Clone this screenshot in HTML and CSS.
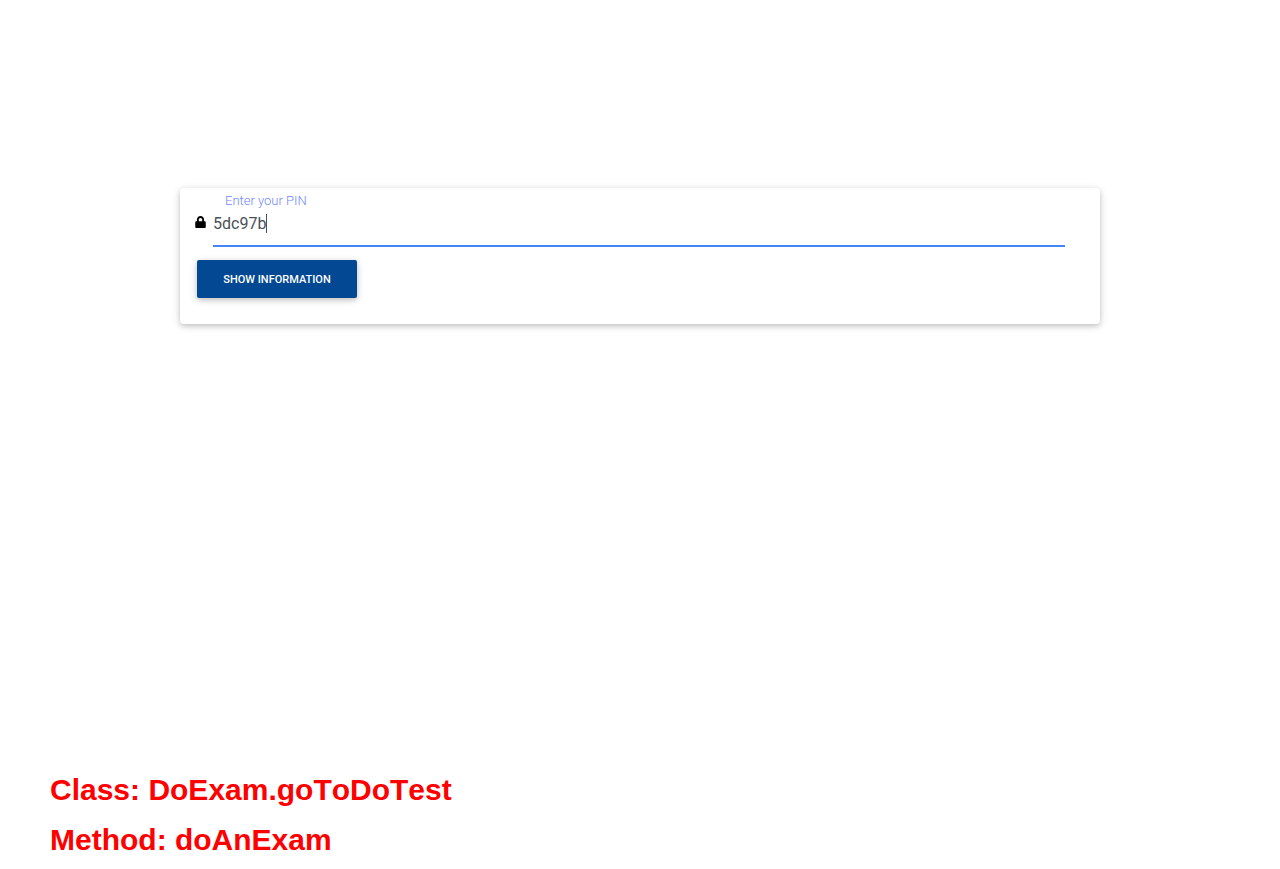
FILE: index.html
```html
<!DOCTYPE html>
<html lang="en">
<head>
<meta charset="utf-8">
<meta name="viewport" content="width=device-width, initial-scale=1">
<title>Enter your PIN</title>
<link rel="stylesheet" href="styles.css">
</head>
<body>
<main class="main">
  <form class="card">
    <label class="pin-label" for="pin">Enter your PIN</label>
    <div class="pin-row">
      <svg class="lock" viewBox="0 0 448 512" aria-hidden="true"><path d="M400 224h-24v-72C376 68.200 307.800 0 224 0S72 68.200 72 152v72H48c-26.500 0-48 21.500-48 48v192c0 26.500 21.500 48 48 48h352c26.500 0 48-21.500 48-48V272c0-26.500-21.500-48-48-48zm-104 0H152v-72c0-39.700 32.300-72 72-72s72 32.300 72 72v72z"/></svg>
      <div class="pin-field">
        <input class="pin-input" id="pin" type="text" value="5dc97b" autocomplete="off" spellcheck="false">
        <span class="caret" aria-hidden="true"></span>
      </div>
    </div>
    <button class="show-button" type="button">SHOW INFORMATION</button>
  </form>
</main>
<footer class="notes">
  <p class="note">Class: DoExam.goToDoTest</p>
  <p class="note">Method: doAnExam</p>
</footer>
</body>
</html>
```
FILE: styles.css
```css
* {
  box-sizing: border-box;
}

body {
  display: flex;
  flex-direction: column;
  min-height: 100vh;
  margin: 0;
  background: #fff;
  font-family: Roboto, "Liberation Sans", sans-serif;
}

.main {
  flex: 1;
  padding: 188px 24px 24px;
}

.card {
  max-width: 920px;
  margin: 0 auto;
  padding: 4px 35px 26px 15px;
  border-radius: 4px;
  background: #fff;
  box-shadow: 0 2px 5px rgba(0, 0, 0, 0.16), 0 2px 10px rgba(0, 0, 0, 0.12);
}

.pin-label {
  display: block;
  width: fit-content;
  margin-left: 30px;
  color: #6f88ff;
  font-size: 13px;
  font-weight: 300;
  line-height: 18px;
}

.pin-row {
  display: flex;
  align-items: flex-start;
  gap: 7px;
}

.lock {
  flex: none;
  width: 11px;
  height: 12px;
  margin-top: 6px;
}

.pin-field {
  position: relative;
  flex: 1;
}

.pin-input {
  display: block;
  width: 100%;
  height: 37px;
  padding: 0 0 8px;
  border: 0;
  border-bottom: 2px solid #4285f4;
  outline: 0;
  background: transparent;
  color: #495057;
  font: 400 16px/24px Roboto, "Liberation Sans", sans-serif;
}

.caret {
  position: absolute;
  top: 4px;
  left: 53px;
  width: 1px;
  height: 19px;
  background: #495057;
}

.show-button {
  display: block;
  width: 160px;
  height: 38px;
  margin: 13px 0 0 2px;
  padding: 2px 0 0;
  border: 0;
  border-radius: 2px;
  background: #024893;
  box-shadow: 0 2px 5px rgba(0, 0, 0, 0.16), 0 2px 10px rgba(0, 0, 0, 0.12);
  color: #fff;
  font: 500 11px/16px Roboto, "Liberation Sans", sans-serif;
}

.notes {
  padding: 0 50px 4px;
  color: #f00;
  font: 700 30px/50px "Liberation Sans", Arial, sans-serif;
  font-kerning: none;
}

.note {
  margin: 0;
}
```
